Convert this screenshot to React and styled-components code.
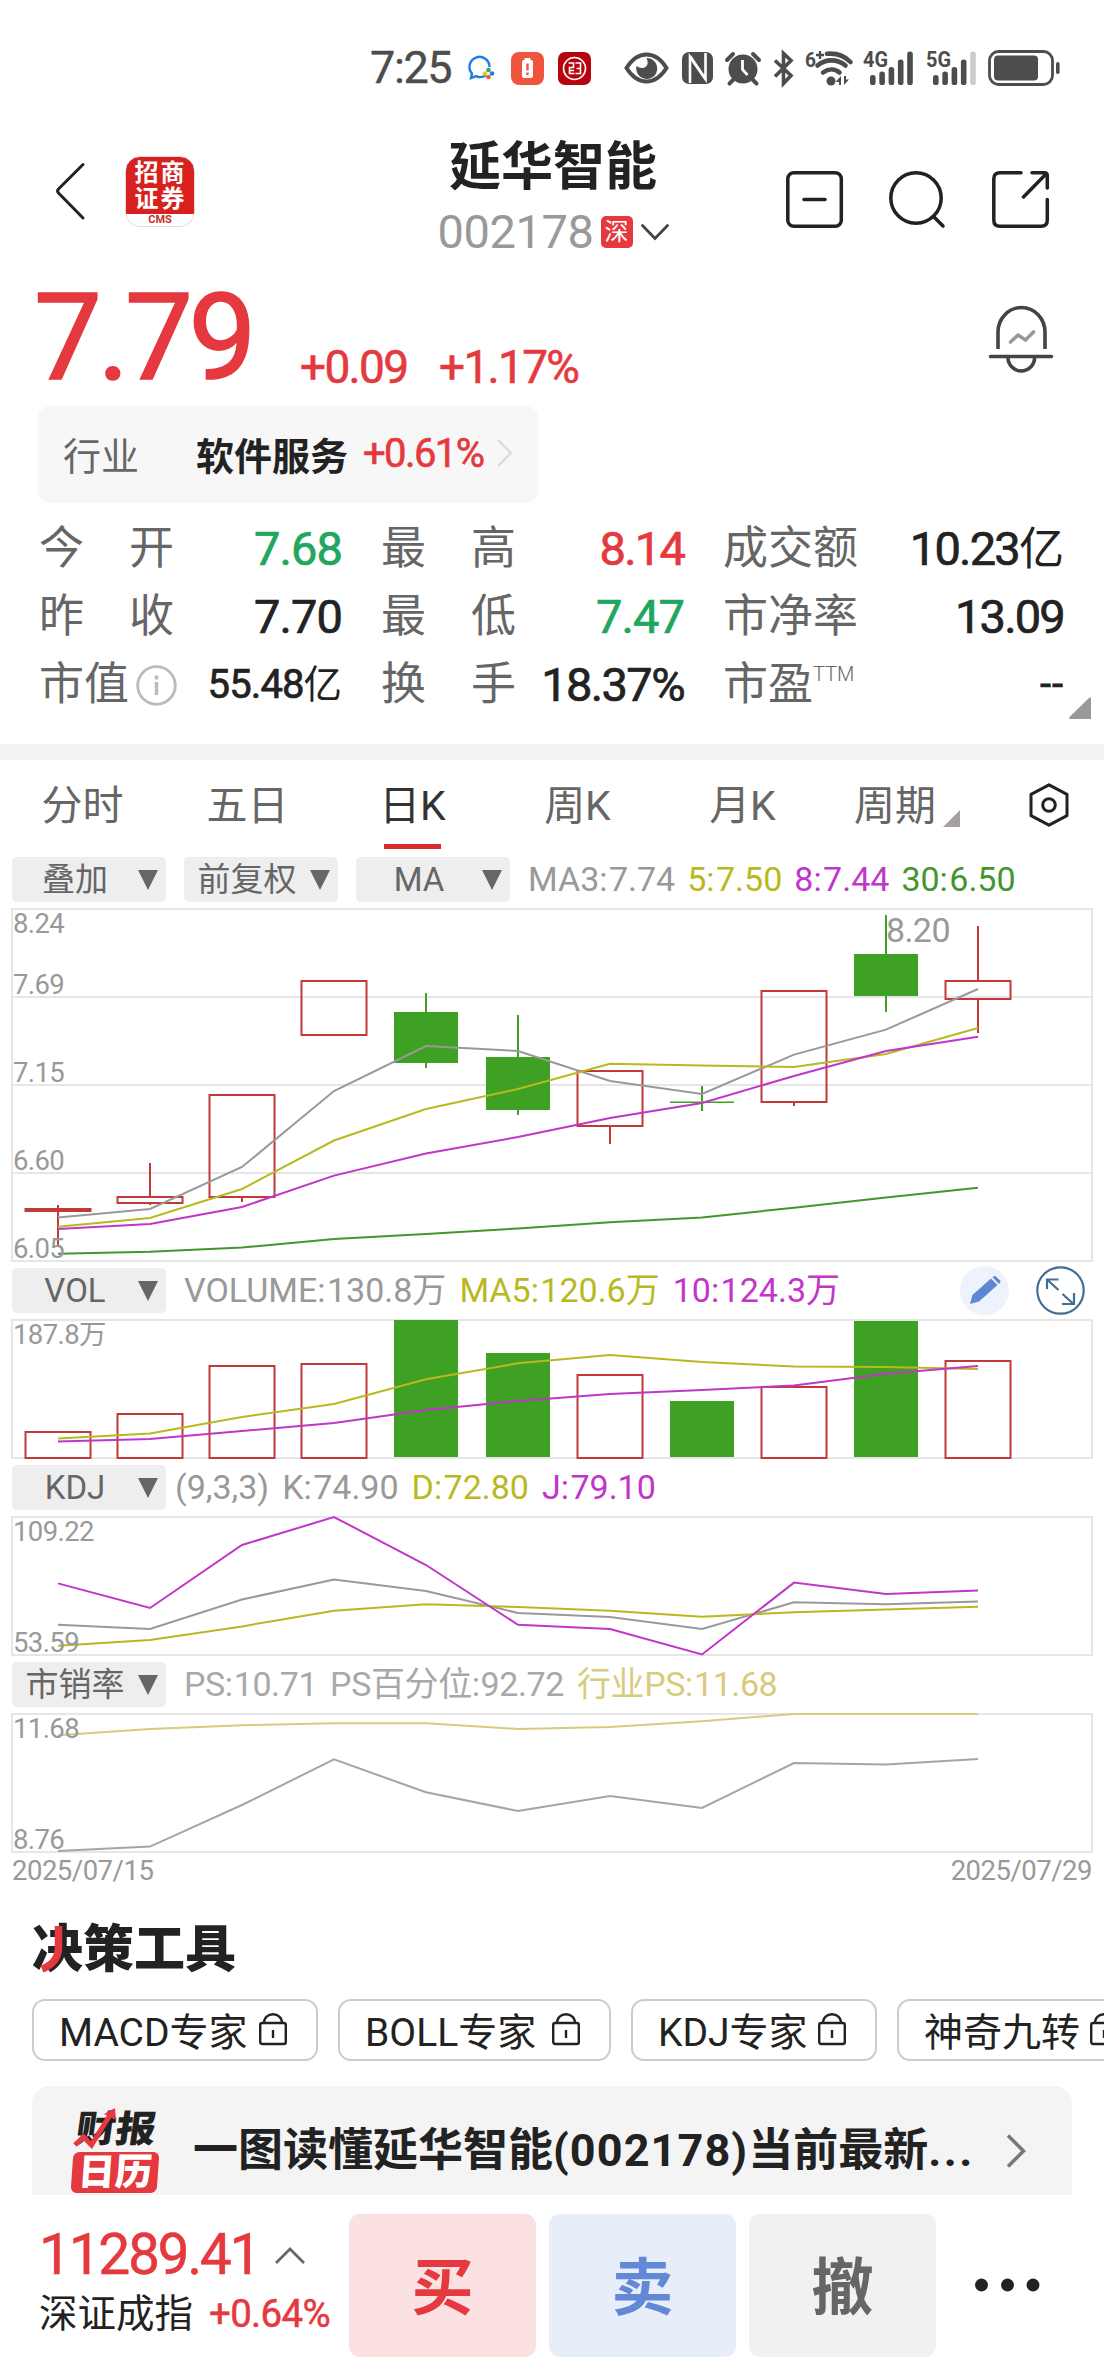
import * as React from "react"
import styled, { createGlobalStyle, css } from "styled-components";

const Colors = {
  red: "#e4393e",
  candleRed: "#c03a3a",
  green: "#21a660",
  candleGreen: "#3fa124",
  ink: "#222222",
  gray: "#666666",
  soft: "#999999",
  yellow: "#b9b91f",
  magenta: "#c136c8",
  maGreen: "#43962f",
  sand: "#d8cb7c",
  grid: "#e6e6e6",
};

const GlobalStyle = createGlobalStyle`
  * {
    box-sizing: border-box;
  }
  body {
    margin: 0;
    background: #fff;
    color: ${Colors.ink};
    font-family: Roboto, "Noto Sans CJK SC", sans-serif;
  }
  svg {
    display: block;
    flex: none;
    overflow: visible;
  }
  button {
    font: inherit;
    border: 0;
    padding: 0;
    background: none;
    color: inherit;
  }
`;

//Containers
const Screen = styled.div`
  width: 1104px;
  height: 2376px;
  overflow: hidden;
  display: flex;
  flex-direction: column;
  background: #fff;
  white-space: nowrap;
`;

const StatusBar = styled.div`
  height: 136px;
  flex: none;
  display: flex;
  align-items: center;
  padding-left: 370px;
  color: #4d4d4d;
`;

const Clock = styled.span`
  width: 97px;
  font-size: 45px;
  line-height: 48px;
  letter-spacing: -1.4px;
  -webkit-text-stroke: 0.4px;
`;

const StatusIcon = styled.svg`
  margin-right: ${(p) => p.$gap || 0}px;
  fill: currentColor;
  font-family: Roboto, sans-serif;
`;

const Header = styled.header`
  height: 128px;
  flex: none;
  display: flex;
  align-items: flex-start;
`;

const BackIcon = styled.svg`
  margin: 26px 0 0 55px;
`;

const BrokerLogo = styled.div`
  width: 70px;
  height: 71px;
  margin: 20px 0 0 40px;
  border-radius: 15px;
  border: 1px solid #e3dcdc;
  overflow: hidden;
  background: linear-gradient(#d8201f 0 57px, #fff 57px);
  text-align: center;
  div {
    padding: 3px 0 0 1px;
    height: 57px;
    color: #fff;
    font-size: 24px;
    font-weight: 700;
    line-height: 26px;
    letter-spacing: 2px;
  }
  span {
    display: block;
    font-size: 11px;
    line-height: 12px;
    font-weight: 700;
    color: #c9302c;
  }
`;

const Titles = styled.div`
  width: 360px;
  margin-left: 178px;
  display: flex;
  flex-direction: column;
  align-items: center;
  h1 {
    margin: 0;
    font-size: 52px;
    line-height: 64px;
    font-weight: 700;
  }
`;

const CodeLine = styled.div`
  height: 64px;
  display: flex;
  align-items: center;
  font-size: 47px;
  line-height: 64px;
  letter-spacing: -0.4px;
  color: ${Colors.soft};
  svg {
    margin-left: 8px;
  }
`;

const MarketBadge = styled.span`
  width: 32px;
  height: 32px;
  margin-left: 7px;
  border-radius: 5px;
  background: ${Colors.red};
  color: #fff;
  font-size: 24px;
  line-height: 33px;
  letter-spacing: 0;
  text-align: center;
`;

const HeaderActions = styled.div`
  display: flex;
  gap: 46px;
  margin: 35px 0 0 53px;
`;

const PriceRow = styled.div`
  height: 142px;
  flex: none;
  display: flex;
  align-items: flex-start;
  color: ${Colors.red};
`;

const Price = styled.div`
  width: 300px;
  padding: 11px 0 0 34px;
  font-size: 121px;
  line-height: 126px;
  letter-spacing: -4.5px;
  -webkit-text-stroke: 1.6px;
`;

const Change = styled.div`
  width: ${(p) => p.$width}px;
  padding-top: 78px;
  font-size: 46px;
  line-height: 50px;
  letter-spacing: -1.7px;
  -webkit-text-stroke: 0.6px;
`;

const BellIcon = styled.svg`
  margin: 42px 0 0 auto;
  margin-right: 50px;
`;

const IndustryCard = styled.div`
  width: 500px;
  height: 97px;
  flex: none;
  margin-left: 38px;
  padding: 0 0 3px 25px;
  display: flex;
  align-items: center;
  border-radius: 12px;
  background: #f7f7f7;
  font-size: 38px;
  color: ${Colors.gray};
  strong {
    width: 167px;
    margin-left: 57px;
    color: ${Colors.ink};
  }
  em {
    width: 134px;
    font-style: normal;
    font-size: 40px;
    letter-spacing: -1.6px;
    color: ${Colors.red};
    -webkit-text-stroke: 0.6px;
  }
`;

const StatGrid = styled.div`
  position: relative;
  height: 241px;
  flex: none;
  padding: 12px 40px 0 39px;
  display: grid;
  grid-template-columns: 303px 303px 341px;
  grid-auto-rows: 68px;
  column-gap: 39px;
`;

const Stat = styled.div`
  display: flex;
  justify-content: space-between;
  align-items: center;
  line-height: 68px;
`;

const StatLabel = styled.span`
  min-width: 135px;
  display: flex;
  justify-content: space-between;
  align-items: center;
  font-size: 45px;
  color: ${Colors.gray};
  sup {
    margin: -22px auto 0 0;
    font-size: 20px;
    font-weight: 300;
    line-height: 24px;
  }
  svg {
    margin-right: -3px;
  }
`;

const StatValue = styled.span`
  font-size: ${(p) => (p.$small ? 40 : 47)}px;
  letter-spacing: ${(p) => p.$track || -0.9}px;
  color: ${(p) => p.$color || Colors.ink};
  -webkit-text-stroke: 0.7px;
  i {
    font-style: normal;
    font-size: 0.96em;
    letter-spacing: 0;
    -webkit-text-stroke: 0;
  }
`;

const CornerTriangle = styled.svg`
  position: absolute;
  right: 13px;
  bottom: 25px;
`;

const Divider = styled.div`
  height: 16px;
  flex: none;
  background: #f2f3f5;
`;

const Tabs = styled.nav`
  height: 97px;
  flex: none;
  display: flex;
  align-items: center;
  padding: 0 0 13px 0;
  font-size: 41px;
  color: ${Colors.gray};
`;

const Tab = styled.div`
  position: relative;
  width: 165px;
  text-align: center;
  ${(p) => p.$active && css`
    color: #333;
    &::after {
      content: "";
      position: absolute;
      left: 54px;
      bottom: -17px;
      width: 57px;
      height: 5px;
      background: #d92a2d;
    }
  `}
`;

const PeriodTab = styled.div`
  display: flex;
  align-items: flex-end;
  gap: 7px;
  margin-left: 29px;
  svg {
    margin-bottom: 5px;
  }
`;

const HexIcon = styled.svg`
  margin: 6px 0 0 69px;
`;

const PanelBar = styled.div`
  height: 45px;
  flex: none;
  display: flex;
  align-items: center;
  margin: ${(p) => (p.$first ? "0 0 7px 12px" : "7px 0 7px 12px")};
`;

const Picker = styled.button`
  width: 154px;
  height: 45px;
  flex: none;
  margin-right: 18px;
  display: flex;
  align-items: center;
  border-radius: 5px;
  background: #eee;
  font-size: 33px;
  line-height: 47px;
  color: ${Colors.gray};
  span {
    width: 126px;
    text-align: center;
  }
`;

const Legend = styled.div`
  display: flex;
  gap: ${(p) => p.$gap || 13}px;
  margin-left: ${(p) => p.$shift || 0}px;
  font-size: 34px;
  line-height: 47px;
  letter-spacing: ${(p) => p.$track || 0}px;
  word-spacing: -7px;
`;

const LegendItem = styled.span`
  color: ${(p) => p.$color};
`;

const RoundButtons = styled.div`
  display: flex;
  gap: 27px;
  margin: 0 19px 0 auto;
`;

const ChartSvg = styled.svg`
  margin-left: 12px;
  font-family: Roboto, "Noto Sans CJK SC", sans-serif;
  polyline {
    fill: none;
    stroke-width: 2;
  }
  text {
    fill: ${Colors.soft};
    font-size: 27.5px;
    letter-spacing: -0.6px;
  }
`;

const PeakLabel = styled.text`
  && {
    font-size: 34px;
  }
`;

const DateRow = styled.div`
  height: 36px;
  flex: none;
  display: flex;
  justify-content: space-between;
  padding: 0 12px;
  font-size: 27.5px;
  line-height: 37px;
  letter-spacing: -0.5px;
  color: ${Colors.soft};
`;

const ToolsTitle = styled.h2`
  position: relative;
  height: 56px;
  flex: none;
  margin: 34px 0 21px 32px;
  font-size: 51px;
  line-height: 56px;
  font-weight: 900;
  svg {
    position: absolute;
    left: 9px;
    top: 2px;
  }
`;

const Chips = styled.div`
  display: flex;
  flex: none;
  gap: 20px;
  padding-left: 32px;
`;

const Chip = styled.div`
  width: ${(p) => p.$width}px;
  height: 62px;
  flex: none;
  display: flex;
  align-items: center;
  justify-content: space-between;
  padding: 0 29px 3px 25px;
  border: 2px solid #ccc;
  border-radius: 13px;
  font-size: 39px;
`;

const Banner = styled.div`
  width: 1040px;
  height: 109px;
  flex: none;
  margin: 25px 0 0 32px;
  display: flex;
  align-items: flex-start;
  border-radius: 18px 18px 0 0;
  background: #f4f4f4;
  strong {
    width: 845px;
    padding-left: 32px;
    font-size: 45px;
    line-height: 130px;
  }
  > svg {
    margin-top: 48px;
  }
`;

const Spread = styled.span`
  letter-spacing: ${(p) => p.$track}px;
`;

const ReportLogo = styled.div`
  position: relative;
  width: 90px;
  margin: 22px 0 0 39px;
  font-weight: 900;
  svg {
    position: absolute;
    left: 3px;
    top: 0;
  }
`;

const ReportTop = styled.div`
  height: 44px;
  padding-left: 5px;
  font-size: 40px;
  line-height: 44px;
  transform: skewX(-8deg) scaleY(0.92);
`;

const ReportBottom = styled.div`
  width: 86px;
  height: 41px;
  margin-left: 1px;
  border-radius: 6px;
  background: ${Colors.red};
  color: #fff;
  font-size: 37px;
  line-height: 41px;
  text-align: center;
  transform: skewX(-4deg);
`;

const TradeBar = styled.footer`
  flex: 1;
  display: flex;
  align-items: flex-start;
  padding-top: 19px;
`;

const IndexInfo = styled.div`
  width: 349px;
  padding: 8px 0 0 39px;
`;

const IndexLine = styled.div`
  display: flex;
  align-items: center;
  color: ${Colors.red};
  font-size: ${(p) => (p.$big ? 57 : 38.5)}px;
  line-height: ${(p) => (p.$big ? 66 : 52)}px;
  letter-spacing: ${(p) => (p.$big ? -2.4 : 0)}px;
  -webkit-text-stroke: ${(p) => (p.$big ? 0.5 : 0)}px;
  svg {
    margin-left: 16px;
  }
  span {
    width: 170px;
    color: ${Colors.ink};
  }
  em {
    font-style: normal;
    letter-spacing: -0.7px;
    -webkit-text-stroke: 0.5px;
  }
`;

const TradeButton = styled.button`
  width: 187px;
  height: 143px;
  margin-right: 13px;
  padding-bottom: 6px;
  border-radius: 11px;
  font-size: 62px;
  font-weight: 700;
  color: ${(p) => p.$color};
  background: ${(p) => p.$bg};
`;

const MoreIcon = styled.svg`
  margin: 64px 0 0 26px;
`;

//Chart data, y values are measured from the top edge of each frame
const columnX = (i) => 46 + i * 92;

const candles = [
  { up: true, top: 300, bottom: 302, high: 296, low: 336 },
  { up: true, top: 288, bottom: 294, high: 254, low: 296 },
  { up: true, top: 186, bottom: 288, high: 186, low: 293 },
  { up: true, top: 72, bottom: 126, high: 72, low: 126 },
  { up: false, top: 103, bottom: 154, high: 84, low: 159 },
  { up: false, top: 148, bottom: 201, high: 106, low: 206 },
  { up: true, top: 162, bottom: 217, high: 162, low: 235 },
  { up: false, top: 192.5, bottom: 194, high: 177, low: 202 },
  { up: true, top: 82, bottom: 193, high: 82, low: 197 },
  { up: false, top: 45, bottom: 87, high: 6, low: 103 },
  { up: true, top: 72, bottom: 90, high: 17, low: 124 },
];

const volumes = [112, 94, 46, 44, 0, 33, 55, 81, 67, 1, 41];

const priceLines = [
  { color: "#999", ys: [308.5, 300, 258, 182, 137, 142, 172, 185, 145.6, 120.6, 80] },
  { color: Colors.yellow, ys: [317.7, 309, 280, 231.5, 200, 180, 154.7, 156.4, 158, 145, 119] },
  { color: Colors.magenta, ys: [320, 315, 298, 266.6, 244.6, 228, 209, 194, 167, 142, 127.7] },
  { color: Colors.maGreen, ys: [344.7, 342.7, 338.6, 330, 325, 319.4, 313.3, 308.5, 298.7, 288.6, 278.8] },
];

const volumeLines = [
  { color: Colors.yellow, ys: [118.4, 113.6, 97, 84, 59.3, 43.3, 35, 42, 46.5, 47, 49] },
  { color: Colors.magenta, ys: [121.6, 119, 111, 103, 90, 81, 74, 70, 65.4, 53.7, 46] },
];

const kdjLines = [
  { color: "#999", ys: [107.8, 112, 82.5, 62.4, 74, 96, 100, 112, 85.3, 87.3, 84.5] },
  { color: Colors.yellow, ys: [128.7, 123, 109.4, 93.7, 87.3, 90, 93.7, 99.8, 95.3, 92.5, 89.7] },
  { color: Colors.magenta, ys: [66.4, 91, 28, 0, 48, 107.8, 112, 137.5, 65.6, 77, 73.6] },
];

const psLines = [
  { color: Colors.sand, ys: [21.3, 15, 11.3, 9.2, 9.2, 15, 13, 7.2, 0, 0, 0] },
  { color: "#a5a5a5", ys: [137, 132.6, 91, 45.4, 78.3, 97, 82, 94, 49, 50.6, 45] },
];

const stats = [
  { label: ["今", "开"], value: "7.68", color: Colors.green },
  { label: ["最", "高"], value: "8.14", color: Colors.red, track: -1.8 },
  { label: ["成交额"], value: "10.23", unit: "亿", track: -1.8 },
  { label: ["昨", "收"], value: "7.70" },
  { label: ["最", "低"], value: "7.47", color: Colors.green },
  { label: ["市净率"], value: "13.09", track: -1.8 },
  { label: ["市值"], info: true, value: "55.48", unit: "亿", small: true },
  { label: ["换", "手"], value: "18.37%", track: -1.6 },
  { label: ["市盈"], sup: "TTM", value: "--", track: 1, small: true },
];

const Lines = ({ items }) => items.map((line, n) => (
  <polyline
    key={n}
    stroke={line.color}
    points={line.ys.map((y, i) => `${columnX(i)},${y}`).join(" ")}
  />
));

const Chart = ({ height, grid = [], labels, children }) => (
  <ChartSvg width="1080" height={height}>
    <rect width="1080" height={height} fill="none" stroke={Colors.grid} strokeWidth="2" />
    {grid.map((y) => (
      <line key={y} x1="0" x2="1080" y1={y} y2={y} stroke={Colors.grid} strokeWidth="2" />
    ))}
    {children}
    {labels.map(([text, y]) => <text key={text} x="1" y={y}>{text}</text>)}
  </ChartSvg>
);

const Candle = ({ x, up, top, bottom, high, low }) => {
  const color = up ? Colors.candleRed : Colors.candleGreen;
  return (
    <g stroke={color} strokeWidth="2">
      <line x1={x} x2={x} y1={high} y2={top} />
      <line x1={x} x2={x} y1={bottom} y2={low} />
      {up
        ? <rect x={x - 32.5} y={top} width="65" height={bottom - top} fill={bottom - top < 5 ? color : "none"} />
        : <rect x={x - 32} y={top} width="64" height={bottom - top} fill={color} stroke="none" />}
    </g>
  );
};

const VolumeBar = ({ x, up, top }) => (
  up
    ? <rect x={x - 32.5} y={top} width="65" height={138 - top} fill="none" stroke={Colors.candleRed} strokeWidth="2" />
    : <rect x={x - 32} y={top} width="64" height={137 - top} fill={Colors.candleGreen} />
);

const Dropdown = ({ children }) => (
  <Picker>
    <span>{children}</span>
    <svg width="20" height="20"><path d="M0 0h20l-10 20z" fill="#666" /></svg>
  </Picker>
);

const Signal = ({ name, weak, gap }) => (
  <StatusIcon width="51" height="36" $gap={gap}>
    <text x="0" y="17" fontSize="22" fontWeight="700" textLength="25" lengthAdjust="spacingAndGlyphs">{name}</text>
    {[25, 21.5, 17, 9.5, 1.5].map((y, i) => (
      <rect key={y} x={7 + i * 9.3} y={y} width="5.6" height={35 - y} rx="2.6" fill={weak && i === 4 ? "#ccc" : "#4d4d4d"} />
    ))}
  </StatusIcon>
);

const Lock = () => (
  <svg width="28" height="32" fill="none" stroke="#222" strokeWidth="2.4">
    <rect x="1.2" y="10" width="25.6" height="21" rx="2" />
    <path d="M5 10C5 4.500 9 1.200 14 1.200S23 4.500 23 10M14 17v8" />
  </svg>
);

const Status = () => (
  <StatusBar>
    <Clock>7:25</Clock>
    <StatusIcon width="28" height="26" $gap={16}>
      <path d="M19 20.500c-3 1.800-7 2-10 .6l-5 1.900 1-4.500A10 10 0 1 1 22.500 12" fill="none" stroke="#1d7fe0" strokeWidth="2.400" />
      <circle cx="21.500" cy="15" r="2.300" fill="#3aa757" />
      <circle cx="25" cy="18.500" r="2.300" fill="#1d7fe0" />
      <circle cx="18" cy="18.500" r="2.300" fill="#f5c22d" />
      <circle cx="21.500" cy="22" r="2.300" fill="#ee5a2c" />
    </StatusIcon>
    <StatusIcon width="33" height="33" $gap={14}>
      <rect width="33" height="33" rx="8" fill="#f0543c" />
      <rect x="11" y="8" width="11" height="18" rx="2" fill="#fff" />
      <rect x="13.500" y="6" width="6" height="3" fill="#fff" />
      <path d="M16.500 11.500v7M16.500 20.500v2.500" stroke="#f0543c" strokeWidth="2.400" />
    </StatusIcon>
    <StatusIcon width="33" height="33" $gap={33}>
      <rect width="33" height="33" rx="7" fill="#b5040d" />
      <g fill="none" stroke="#fff" strokeWidth="1.600">
        <circle cx="16.500" cy="16.500" r="11" />
        <path d="M10.500 11h5v4.500h-4v6h5M17.500 11h5v5.500h-4h4v5h-5M12 18.500h4" />
      </g>
    </StatusIcon>
    <StatusIcon width="45" height="32" $gap={13}>
      <path d="M2.500 16Q11 2.500 22.500 2.500T42.500 16Q34 29.500 22.500 29.500T2.500 16z" fill="none" stroke="#4d4d4d" strokeWidth="4" />
      <path d="M22.500 6a10.500 10.500 0 1 1-10 8c4 3 10 2.500 11-2 .5-2.500-.3-4.500-1-6z" />
    </StatusIcon>
    <StatusIcon width="31" height="32" $gap={12}>
      <rect width="31" height="32" rx="7" />
      <path d="M8 31V5l16 23M23.500 1v26L8 4" fill="none" stroke="#fff" strokeWidth="2.600" />
    </StatusIcon>
    <StatusIcon width="36" height="34" $gap={12}>
      <circle cx="18" cy="18" r="14.500" />
      <path d="M2 9l6-6M34 9l-6-6M8 29l-3.500 3.500M28 29l3.500 3.500" stroke="#4d4d4d" strokeWidth="4" strokeLinecap="round" />
      <path d="M17.500 9v9.500l5 5.500" fill="none" stroke="#fff" strokeWidth="2.800" />
    </StatusIcon>
    <StatusIcon width="21" height="35" $gap={11}>
      <path d="M2 9.500l16 15-7.500 8V2.500l7.500 7-16 16" fill="none" stroke="#4d4d4d" strokeWidth="3.600" />
    </StatusIcon>
    <StatusIcon width="48" height="36" $gap={10}>
      <text x="0" y="17" fontSize="21" fontWeight="700" textLength="11" lengthAdjust="spacingAndGlyphs">6</text>
      <path d="M11 5h8M15 1v8" stroke="#4d4d4d" strokeWidth="2.400" />
      <g fill="none" stroke="#4d4d4d" strokeWidth="4.600" strokeLinecap="round">
        <path d="M22 3.800c9-.8 18 2.500 23.500 8.200M12.500 15.500c8-6.800 20-6.800 28 0M18 22.500c5.500-4 12-4 16.500 0" />
      </g>
      <circle cx="26" cy="31" r="4.500" />
      <path d="M36 26v9h-2v-3h-3.500zM39 26v9l5-5.500h-3V26z" />
    </StatusIcon>
    <Signal name="4G" gap={12} />
    <Signal name="5G" weak gap={11} />
    <StatusIcon width="72" height="36">
      <rect x="1.500" y="1.500" width="63" height="33" rx="9" fill="none" stroke="#4d4d4d" strokeWidth="2.800" />
      <rect x="6" y="5.500" width="44" height="25" rx="4" />
      <rect x="68" y="12" width="3.600" height="12" rx="1.800" />
    </StatusIcon>
  </StatusBar>
);

const App = () => {
  return (
    <>
      <GlobalStyle />
      <Screen>
        <Status />
        <Header>
          <BackIcon width="30" height="58" fill="none" stroke="#222" strokeWidth="3" strokeLinecap="round" strokeLinejoin="round">
            <path d="M28 2.500L3.500 27q-1.800 2 0 4L28 56" />
          </BackIcon>
          <BrokerLogo>
            <div>招商<br />证券</div>
            <span>CMS</span>
          </BrokerLogo>
          <Titles>
            <h1>延华智能</h1>
            <CodeLine>
              002178
              <MarketBadge>深</MarketBadge>
              <svg width="28" height="16" fill="none" stroke="#444" strokeWidth="2.800" strokeLinecap="round">
                <path d="M1.500 1.500L14 14.500 26.500 1.500" />
              </svg>
            </CodeLine>
          </Titles>
          <HeaderActions>
            <svg width="57" height="57" fill="none" stroke="#222" strokeWidth="3.500" strokeLinecap="round">
              <rect x="1.800" y="1.800" width="53.500" height="53.500" rx="6" />
              <path d="M18 28.500h21" />
            </svg>
            <svg width="57" height="57" fill="none" stroke="#222" strokeWidth="3.500" strokeLinecap="round">
              <circle cx="27" cy="27" r="25.200" />
              <path d="M44.500 45.500L54 55" />
            </svg>
            <svg width="57" height="57" fill="none" stroke="#222" strokeWidth="3.500" strokeLinecap="round">
              <path d="M29 1.800H8q-6.200 0-6.200 6V49q0 6.300 6.200 6.300h41q6.300 0 6.300-6.300V28.500M40 1.800h12.500q2.800 0 2.800 2.800V17M54 3L31.500 26" />
            </svg>
          </HeaderActions>
        </Header>
        <PriceRow>
          <Price>7.79</Price>
          <Change $width={139}>+0.09</Change>
          <Change $width={150}>+1.17%</Change>
          <BellIcon width="66" height="68" fill="none" stroke="#444" strokeWidth="3.600" strokeLinecap="round">
            <path d="M10 43V26a23.500 24.500 0 0 1 47 0v17" strokeLinecap="butt" />
            <path d="M2.500 50.500h61M20 51.500a13.300 13.500 0 0 0 26.600 0" />
            <path d="M22.500 36l7.500-7 7.500 5 8-8" stroke="#999" />
          </BellIcon>
        </PriceRow>
        <IndustryCard>
          行业
          <strong>软件服务</strong>
          <em>+0.61%</em>
          <svg width="15" height="28" fill="none" stroke="#ddd" strokeWidth="2.500">
            <path d="M1 1l13 13L1 27" />
          </svg>
        </IndustryCard>
        <StatGrid>
          {stats.map((s) => (
            <Stat key={s.label.join("")}>
              <StatLabel>
                {s.label.map((part) => <span key={part}>{part}</span>)}
                {s.sup && <sup>{s.sup}</sup>}
                {s.info && (
                  <svg width="41" height="41" fill="none" stroke="#bbb" strokeWidth="2.800">
                    <circle cx="20.500" cy="20.500" r="18.800" />
                    <path d="M20.500 17v13M20.500 10.500v4" strokeWidth="3.500" />
                  </svg>
                )}
              </StatLabel>
              <StatValue $color={s.color} $small={s.small} $track={s.track}>
                {s.value}{s.unit && <i>{s.unit}</i>}
              </StatValue>
            </Stat>
          ))}
          <CornerTriangle width="22" height="22">
            <path d="M22 1.500V22H1Q-.5 21.500.5 20L20 1q2-1 2 .5z" fill="#999" />
          </CornerTriangle>
        </StatGrid>
        <Divider />
        <Tabs>
          <Tab>分时</Tab>
          <Tab>五日</Tab>
          <Tab $active>日K</Tab>
          <Tab>周K</Tab>
          <Tab>月K</Tab>
          <PeriodTab>
            周期
            <svg width="17" height="17"><path d="M17 0v17H0z" fill="#a8a0a0" /></svg>
          </PeriodTab>
          <HexIcon width="40" height="44" fill="none" stroke="#222" strokeWidth="3" strokeLinejoin="round">
            <path d="M20 1.800l18 9.500v21.400l-18 9.500-18-9.500V11.300z" />
            <circle cx="20" cy="22" r="6.300" />
          </HexIcon>
        </Tabs>

        <PanelBar $first>
          <Dropdown>叠加</Dropdown>
          <Dropdown>前复权</Dropdown>
          <Dropdown>MA</Dropdown>
          <Legend $gap={12}>
            <LegendItem $color={Colors.soft}>MA3: 7.74</LegendItem>
            <LegendItem $color={Colors.yellow}>5: 7.50</LegendItem>
            <LegendItem $color={Colors.magenta}>8: 7.44</LegendItem>
            <LegendItem $color={Colors.maGreen}>30: 6.50</LegendItem>
          </Legend>
        </PanelBar>
        <Chart
          height={352}
          grid={[88, 176, 264]}
          labels={[["8.24", 24], ["7.69", 85], ["7.15", 173], ["6.60", 261], ["6.05", 349]]}
        >
          {candles.map((c, i) => <Candle key={i} x={columnX(i)} {...c} />)}
          <Lines items={priceLines} />
          <PeakLabel x="874" y="33">8.20</PeakLabel>
        </Chart>

        <PanelBar>
          <Dropdown>VOL</Dropdown>
          <Legend>
            <LegendItem $color={Colors.soft}>VOLUME: 130.8万</LegendItem>
            <LegendItem $color={Colors.yellow}>MA5: 120.6万</LegendItem>
            <LegendItem $color={Colors.magenta}>10: 124.3万</LegendItem>
          </Legend>
          <RoundButtons>
            <svg width="49" height="49">
              <circle cx="24.500" cy="24.500" r="24.500" fill="#edf2fb" />
              <path d="M10 38l2.500-9L31 12.500l6.500 6.500L19 35.500z" fill="#5e87d3" />
              <path d="M32.500 11.200l1.500-1q1-.7 2 .2l4 4q1 1 .2 2l-1.400 1.400z" fill="#5e87d3" />
            </svg>
            <svg width="49" height="49" fill="none" stroke="#456c92" strokeWidth="2.200">
              <circle cx="24.500" cy="24.500" r="23.200" />
              <path d="M11 23V13.500h11.500M11.500 14l11 10M38 27v11H26M37 37.500L26.500 28" />
            </svg>
          </RoundButtons>
        </PanelBar>
        <Chart height={138} labels={[["187.8万", 24]]}>
          {volumes.map((top, i) => <VolumeBar key={i} x={columnX(i)} up={candles[i].up} top={top} />)}
          <Lines items={volumeLines} />
        </Chart>

        <PanelBar>
          <Dropdown>KDJ</Dropdown>
          <Legend $shift={-9}>
            <LegendItem $color={Colors.soft}>(9,3,3)</LegendItem>
            <LegendItem $color={Colors.soft}>K: 74.90</LegendItem>
            <LegendItem $color={Colors.yellow}>D: 72.80</LegendItem>
            <LegendItem $color={Colors.magenta}>J: 79.10</LegendItem>
          </Legend>
        </PanelBar>
        <Chart height={138} labels={[["109.22", 24], ["53.59", 135]]}>
          <Lines items={kdjLines} />
        </Chart>

        <PanelBar>
          <Dropdown>市销率</Dropdown>
          <Legend $track={-0.4}>
            <LegendItem $color="#a8a8a8">PS: 10.71</LegendItem>
            <LegendItem $color="#a8a8a8">PS百分位: 92.72</LegendItem>
            <LegendItem $color={Colors.sand}>行业PS: 11.68</LegendItem>
          </Legend>
        </PanelBar>
        <Chart height={138} labels={[["11.68", 24], ["8.76", 135]]}>
          <Lines items={psLines} />
        </Chart>
        <DateRow>
          <span>2025/07/15</span>
          <span>2025/07/29</span>
        </DateRow>

        <ToolsTitle>
          决策工具
          <svg width="22" height="48" fill="none" stroke={Colors.red} strokeWidth="7.500">
            <path d="M17.500 2v22Q17 39 1 45" />
          </svg>
        </ToolsTitle>
        <Chips>
          <Chip $width={286}>MACD专家<Lock /></Chip>
          <Chip $width={273}>BOLL专家<Lock /></Chip>
          <Chip $width={246}>KDJ专家<Lock /></Chip>
          <Chip $width={252}>神奇九转<Lock /></Chip>
        </Chips>
        <Banner>
          <ReportLogo>
            <ReportTop>财报</ReportTop>
            <ReportBottom>日历</ReportBottom>
            <svg width="44" height="40" fill="none" stroke={Colors.red} strokeWidth="5">
              <path d="M1 37l8.500-8 8 8L36 7" />
              <path d="M41 0l1 12-12-6z" fill={Colors.red} stroke="none" />
            </svg>
          </ReportLogo>
          <strong>
            一图读懂延华智能<Spread $track={1.1}>(002178)</Spread>当前最新<Spread $track={2.4}>...</Spread>
          </strong>
          <svg width="20" height="34" fill="none" stroke="#777" strokeWidth="3.500">
            <path d="M2 1.500L17.500 17 2 32.500" />
          </svg>
        </Banner>

        <TradeBar>
          <IndexInfo>
            <IndexLine $big>
              11289.41
              <svg width="30" height="17" fill="none" stroke="#666" strokeWidth="2.800">
                <path d="M1 16L15 2l14 14" />
              </svg>
            </IndexLine>
            <IndexLine>
              <span>深证成指</span>
              <em>+0.64%</em>
            </IndexLine>
          </IndexInfo>
          <TradeButton $color={Colors.red} $bg="#fce1e2">买</TradeButton>
          <TradeButton $color="#6389d6" $bg="#e7edf9">卖</TradeButton>
          <TradeButton $color={Colors.gray} $bg="#f1f1f1">撤</TradeButton>
          <MoreIcon width="66" height="14" fill="#222">
            <circle cx="6.500" cy="7" r="6.400" />
            <circle cx="32.500" cy="7" r="6.400" />
            <circle cx="58" cy="7" r="6.400" />
          </MoreIcon>
        </TradeBar>
      </Screen>
    </>
  )
}

export default App
